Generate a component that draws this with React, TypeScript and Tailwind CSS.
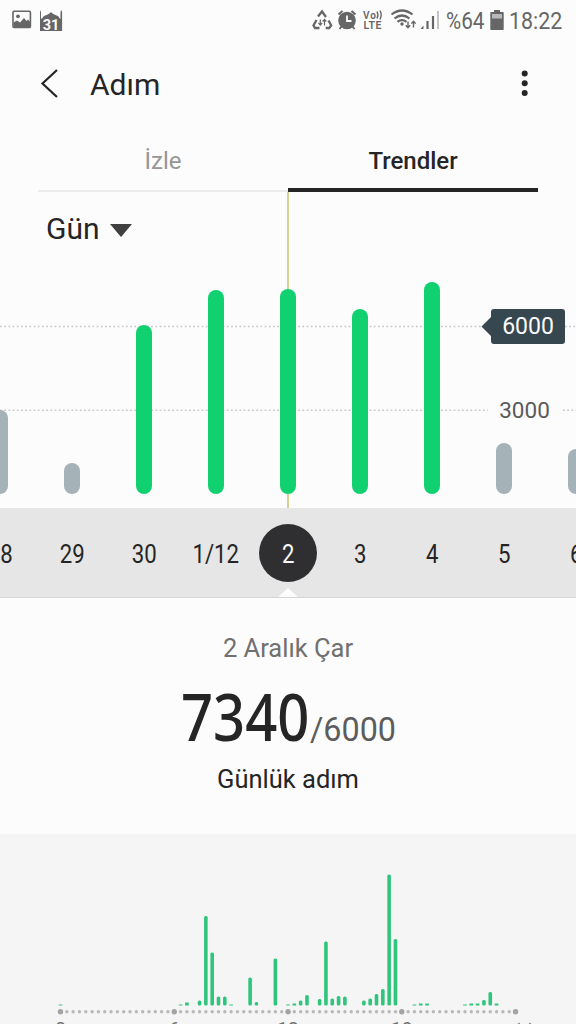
import React from "react";

const days = [
  { label: "28", steps: 84, reached: false },
  { label: "29", steps: 31, reached: false },
  { label: "30", steps: 169, reached: true },
  { label: "1/12", steps: 204, reached: true },
  { label: "2", steps: 205, reached: true, selected: true },
  { label: "3", steps: 185, reached: true },
  { label: "4", steps: 212, reached: true },
  { label: "5", steps: 51, reached: false },
  { label: "6", steps: 45, reached: false },
];

// [slot, height], one slot = 20 minutes
const slots = [
  [0, 1], [19, 1], [20, 3], [22, 5], [23, 89.5], [24, 53], [25, 9], [26, 9],
  [27, 1], [30, 28], [31, 3.5], [34, 47], [36, 1], [37, 2], [38, 5], [39, 10.5],
  [41, 6.5], [42, 64], [43, 7], [44, 9.5], [45, 9], [48, 5], [49, 7],
  [50, 11.5], [51, 16.5], [52, 131], [53, 66.5], [56, 1], [57, 2], [58, 2],
  [64, 1], [65, 2], [66, 2], [67, 5.5], [68, 13.5], [69, 2],
];

const slotX = (i: number) => 60.5 + i * 6.32;

const StatusBar = () => (
  <div className="flex h-10 items-center justify-between pl-3 pr-[13px] text-[#666]">
    <svg width="52" height="40" viewBox="12 0 52 40">
      <rect x="13" y="11.3" width="17.4" height="16.2" rx="1" fill="none" stroke="#666" strokeWidth="1.6" />
      <circle cx="18" cy="16.3" r="1.9" fill="#666" />
      <path d="M13.5 22.5l3.500-2 3 2 4-4.500 2.500 3 1.500-1.500 2.300 2.500v5.500H13.500z" fill="#666" />
      <path d="M40 10l1 2v7l2-1.500c0-2 5-2 8-5.500 3 3.500 8 3.500 8 5.500l1.500 1.500v-7l.8-2 .8 2v19H40z" fill="#666" />
      <text x="51" y="30" textAnchor="middle" fontSize="14.5" fontWeight="700" fill="#fcfcfc" fontFamily="Roboto, sans-serif">31</text>
    </svg>
    <div className="flex items-center">
      <svg width="130" height="40" viewBox="310 0 130 40" fill="none" stroke="#666">
        <path d="M317 16.500l4-5 4 5.500M327.500 20.500l2.700 5-2 2.500h-3.500M318.500 28h-4.500l-1.500-2.500 3-5.500" strokeWidth="2.300" />
        <path d="M319.300 19.500v5.500M317.500 23l1.800 2 1.800-2M323.500 25.500v-6M321.700 21.500l1.800-2 1.800 2" strokeWidth="1.200" />
        <circle cx="346" cy="20.500" r="8.800" fill="#666" stroke="none" />
        <path d="M337.500 14.500l4-3.500M354.500 14.500l-4-3.500M340.500 26.500l-2 2.500M351.500 26.500l2 2.500" strokeWidth="2" />
        <path d="M346 15.500v5.500h4.500" stroke="#fcfcfc" strokeWidth="1.800" />
        <text x="362" y="18.500" fontSize="10" fontWeight="600" fill="#666" stroke="none" fontFamily="Roboto, sans-serif" textLength="13">Vo</text>
        <path d="M376 11.500q1.800 3.500 0 7M379 10.500q2.400 4.500 0 9" strokeWidth="1.400" />
        <text x="362.500" y="29" fontSize="10.500" fontWeight="600" fill="#666" stroke="none" fontFamily="Roboto, sans-serif" textLength="18">LTE</text>
        <path d="M390.500 14.500q10.500-8 21 0M393.500 18.500q7.500-6 15 0M396.500 21.800q4.500-3.500 9 0" strokeWidth="2.200" />
        <circle cx="401" cy="24" r="1.700" fill="#666" stroke="none" />
        <path d="M407 21.500v6M404.800 25.300l2.200 2.400 2.200-2.400M412.500 27.500v-6M410.300 23.600l2.200-2.400 2.200 2.400" strokeWidth="1.400" />
        <path d="M419.500 29l3-3.500v3.500z" fill="#666" stroke="none" />
        <path d="M426.500 29v-8M432 29v-13" strokeWidth="2.200" />
        <path d="M437 29V11" stroke="#c4c4c4" strokeWidth="2" />
      </svg>
      <span className="ml-[5px] w-[39px] origin-left scale-x-[0.9] pt-0.5 text-[23px] leading-none">%64</span>
      <svg className="ml-[5px]" width="14" height="20" viewBox="0 0 14 20">
        <path d="M4 0h6v2h3q.700 0 .700.700v16.600q0 .700-.700.700H1q-.700 0-.700-.700V2.700Q.300 2 1 2h3z" fill="#666" />
        <rect x="2" y="4" width="10" height="4.500" fill="#b9b9b9" />
      </svg>
      <span className="ml-[5px] w-[54px] origin-left scale-x-[0.91] pt-[3px] text-[23.500px] leading-none">18:22</span>
    </div>
  </div>
);

const Header = () => (
  <header className="flex h-[88px] items-center px-10 text-[#252525]">
    <svg width="18" height="30" viewBox="0 0 18 30" fill="none" stroke="currentColor" strokeWidth="2.200">
      <path d="M17 1L2.500 14.500 17 28" />
    </svg>
    <h1 className="ml-8 pt-0.5 text-[30px] leading-none">Adım</h1>
    <svg className="ml-auto mr-[7px]" width="8" height="28" viewBox="0 0 8 28" fill="currentColor">
      <circle cx="3.700" cy="3.500" r="3" />
      <circle cx="3.700" cy="13.200" r="3" />
      <circle cx="3.700" cy="23" r="3" />
    </svg>
  </header>
);

const Tabs = () => (
  <nav className="mx-[38px] flex h-16 text-2xl leading-none">
    <button className="w-[250px] border-b-2 border-[#ececec] pt-1 text-[#969696]">İzle</button>
    <button className="w-[250px] border-b-4 border-[#252525] pt-1.5 font-medium text-[#252525]">Trendler</button>
  </nav>
);

const TrendChart = () => (
  <section className="relative h-[316px]">
    <svg className="block" width="576" height="316" viewBox="0 192 576 316">
      <path d="M0 326.500H482M565 326.500h11M0 410.300H488M563 410.300h13" stroke="#c8c8c8" strokeWidth="1.400" strokeDasharray="1.800 2.400" />
      <path d="M288 192v316" stroke="#d3cb87" strokeWidth="1.800" />
      {days.map((day, i) => (
        <rect
          key={day.label}
          x={i * 72 - 8}
          y={494 - day.steps}
          width="16"
          height={day.steps}
          rx="8"
          fill={day.reached ? "#10d070" : "#a5b2b8"}
        />
      ))}
      <path d="M481.500 326.500l9.500-9.500v-5q0-3 3-3h68q3 0 3 3v29q0 3-3 3h-68q-3 0-3-3v-5z" fill="#36474f" />
      <text x="528" y="334.300" textAnchor="middle" fontSize="23" fill="#fafafa">6000</text>
      <text x="524.500" y="418" textAnchor="middle" fontSize="22.500" fill="#5a5a5a">3000</text>
    </svg>
    <button className="absolute left-[46px] top-[22px] flex items-center text-[30px] leading-none text-[#252525]">
      Gün
      <svg className="ml-[10px] mt-0.5" width="22" height="13" viewBox="0 0 22 13">
        <path d="M0 0h22L11 13z" fill="#404040" />
      </svg>
    </button>
  </section>
);

const DayPicker = () => (
  <div className="relative h-[90px] overflow-hidden border-b border-[#d6d6d6] bg-[#e6e6e6]">
    <div className="-ml-9 flex h-full w-[648px] items-center pt-px">
      {days.map((day) => (
        <div key={day.label} className="flex w-[72px] shrink-0 justify-center">
          <span
            className={
              day.selected
                ? "flex size-[58px] items-center justify-center rounded-full bg-[#2f2f31] pt-0.5 text-[25.500px] text-[#fafafa]"
                : "pt-0.5 text-[25.500px] text-[#252525]"
            }
          >
            <span className="inline-block scale-x-[0.87]">{day.label}</span>
          </span>
        </div>
      ))}
    </div>
    <svg className="absolute -bottom-px left-[277px]" width="22" height="10" viewBox="0 0 22 10">
      <path d="M0 10L11 0l11 10z" fill="#fcfcfc" />
    </svg>
  </div>
);

const Summary = () => (
  <section className="flex h-[236px] flex-col items-center pt-[35px] text-[#252525]">
    <p className="text-[25.500px] leading-[30px] text-[#707070]">2 Aralık Çar</p>
    <p className="mt-[13px] flex h-[72px] items-baseline">
      <span className="w-[129px] origin-left scale-x-[0.87] font-['Noto_Sans',sans-serif] text-[64.500px] font-medium leading-[80px]">
        7340
      </span>
      <span className="w-[86px] origin-left scale-x-[0.98] text-[33px] leading-none text-[#5c5c5c]">/6000</span>
    </p>
    <p className="mt-4 text-[25.500px] leading-[30px]">Günlük adım</p>
  </section>
);

const DayDetail = () => (
  <section className="h-[190px] bg-[#f5f5f5]">
    <svg className="block" width="576" height="190" viewBox="0 834 576 190">
      {slots.map(([i, h]) => (
        <rect key={i} x={slotX(i) - 1.8} y={1005.5 - h} width="3.600" height={h} rx={h > 3 ? 1.5 : 0} fill="#30c57c" />
      ))}
      {Array.from({ length: 73 }, (_, i) => (
        <circle key={i} cx={slotX(i)} cy="1011.700" r={i % 18 === 0 ? 2.7 : 1.7} fill={i % 18 === 0 ? "#a3a3a3" : "#b8b8b8"} />
      ))}
      {["0", "6", "12", "18"].map((hour, i) => (
        <text key={hour} x={slotX(i * 18)} y="1035" textAnchor="middle" fontSize="19" fill="#707070">
          {hour}
        </text>
      ))}
      <text x="524.500" y="1036" textAnchor="middle" fontSize="17" fill="#707070">(s)</text>
    </svg>
  </section>
);

const App = () => {
  return (
    <main className="h-[1024px] w-[576px] overflow-hidden bg-[#fcfcfc] font-['Roboto',sans-serif]">
      <StatusBar />
      <Header />
      <Tabs />
      <TrendChart />
      <DayPicker />
      <Summary />
      <DayDetail />
    </main>
  );
};

export default App;
